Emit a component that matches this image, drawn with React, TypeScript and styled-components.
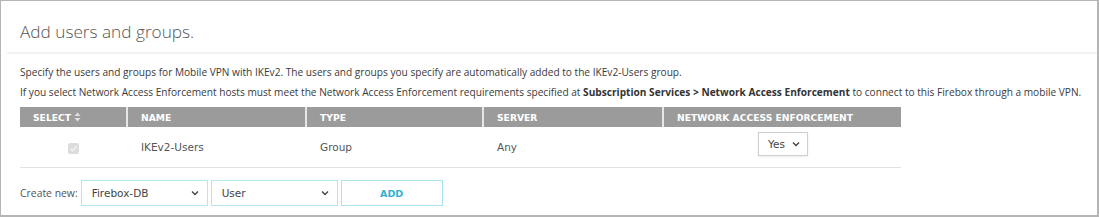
import React from 'react'
import styled, { createGlobalStyle } from 'styled-components'

const GlobalStyle = createGlobalStyle`
  html, body { margin: 0; padding: 0; background: #fff; }
  body { font-family: "Open Sans", "Liberation Sans", sans-serif; }
`

const Panel = styled.div`
  box-sizing: border-box;
  width: 1099px;
  height: 217px;
  border: 1px solid #b5b5b5;
  border-right-width: 2px;
  border-bottom-width: 2px;
  background: #fff;
`

const Title = styled.h2`
  margin: 0 0 0 6px;
  padding: 19px 0 8px 13px;
  font-family: "Open Sans", sans-serif;
  font-weight: 300;
  font-size: 17.2px;
  line-height: 24px;
  color: #555;
  border-bottom: 2px solid #f2f2f2;
`

const Body = styled.div`
  padding: 8px 0 0 19px;
`

const Text = styled.p`
  margin: 0;
  font-size: 10.15px;
  line-height: 20px;
  color: #3a3a3a;
  white-space: nowrap;

  b { font-weight: 700; color: #333; }
`

const Table = styled.table`
  width: 881px;
  table-layout: fixed;
  border-collapse: collapse;
  margin-top: 5px;
  font-family: Verdana, "DejaVu Sans", sans-serif;
`

const Th = styled.th`
  height: 20px;
  padding: 0 0 0 13px;
  box-sizing: border-box;
  background: #9b9b9b;
  color: #fff;
  font-size: 9.2px;
  font-weight: 700;
  text-align: left;
  border-left: 2px solid #e6e6e6;
  white-space: nowrap;
  &:first-child { border-left: none; }
`

const Td = styled.td<{ $center?: boolean }>`
  height: 40px;
  padding: 0 0 0 14px;
  font-size: 10.5px;
  color: #555;
  border-bottom: 1px solid #e2e2e2;
  text-align: ${({ $center }) => ($center ? 'center' : 'left')};
  &:first-child { padding-left: 0; }
`

const SortIcon = styled.svg`
  margin-left: 3px;
  vertical-align: -1px;
`

const Check = styled.svg`
  display: inline-block;
  margin-top: 2px;
  vertical-align: middle;
`

const SmallSelect = styled.div`
  display: inline-flex;
  align-items: center;
  justify-content: space-between;
  box-sizing: border-box;
  width: 50px;
  height: 24px;
  padding: 0 7px 0 9px;
  margin-left: 81px;
  margin-top: -6px;
  border: 1px solid #cfcfcf;
  box-shadow: 0 1px 2px rgba(0, 0, 0, 0.08);
  font-size: 10.5px;
  color: #444;
  background: #fff;
`

const CreateRow = styled.div`
  display: flex;
  align-items: center;
  gap: 3px;
  margin-top: 12px;
`

const Label = styled.span`
  flex: 0 0 56px;
  font-size: 10.4px;
  color: #555;
  white-space: nowrap;
`

const Field = styled.div<{ $w: number }>`
  display: flex;
  align-items: center;
  justify-content: space-between;
  box-sizing: border-box;
  width: ${({ $w }) => $w}px;
  height: 26px;
  padding: 0 8px 0 10px;
  border: 1px solid #b3e6ee;
  font-family: Verdana, "DejaVu Sans", sans-serif;
  font-size: 10.5px;
  color: #444;
  background: #fff;
`

const AddButton = styled.button`
  box-sizing: border-box;
  width: 102px;
  height: 26px;
  border: 1px solid #a9e3ec;
  background: #fff;
  color: #32b0cf;
  font-family: Verdana, "DejaVu Sans", sans-serif;
  font-weight: 700;
  font-size: 9.5px;
`

const Chevron = () => (
  <svg width="8" height="6" viewBox="0 0 8 6">
    <path d="M1 1.5 L4 4.5 L7 1.5" fill="none" stroke="#444" strokeWidth="1.4" />
  </svg>
)

const columns = [
  { name: 'SELECT', w: 107 },
  { name: 'NAME', w: 179 },
  { name: 'TYPE', w: 177 },
  { name: 'SERVER', w: 180 },
  { name: 'NETWORK ACCESS ENFORCEMENT', w: 238 },
]

export default function App() {
  return (
    <>
      <GlobalStyle />
      <Panel>
        <Title>Add users and groups.</Title>
        <Body>
          <Text>
            Specify the users and groups for Mobile VPN with IKEv2. The users and groups you specify are
            automatically added to the IKEv2-Users group.
          </Text>
          <Text>
            If you select Network Access Enforcement hosts must meet the Network Access Enforcement requirements
            specified at <b>Subscription Services &gt; Network Access Enforcement</b> to connect to this Firebox
            through a mobile VPN.
          </Text>
          <Table>
            <colgroup>
              {columns.map((c) => (
                <col key={c.name} style={{ width: c.w }} />
              ))}
            </colgroup>
            <thead>
              <tr>
                {columns.map((c, i) => (
                  <Th key={c.name}>
                    {c.name}
                    {i === 0 && (
                      <SortIcon width="7" height="10" viewBox="0 0 7 10">
                        <path d="M3.5 0.5 L6.5 4 L0.5 4 Z" fill="#e0e0e0" />
                        <path d="M3.5 9.5 L6.5 6 L0.5 6 Z" fill="#e0e0e0" />
                      </SortIcon>
                    )}
                  </Th>
                ))}
              </tr>
            </thead>
            <tbody>
              <tr>
                <Td $center>
                  <Check width="11" height="11" viewBox="0 0 11 11">
                    <rect x="0" y="0" width="11" height="11" rx="2" fill="#dcdcdc" />
                    <path d="M2.5 5.8 L4.6 7.8 L8.6 3.2" fill="none" stroke="#f4f4f4" strokeWidth="1.3" />
                  </Check>
                </Td>
                <Td>IKEv2-Users</Td>
                <Td>Group</Td>
                <Td>Any</Td>
                <Td>
                  <SmallSelect>
                    Yes <Chevron />
                  </SmallSelect>
                </Td>
              </tr>
            </tbody>
          </Table>
          <CreateRow>
            <Label>Create new:</Label>
            <Field $w={127}>
              Firebox-DB <Chevron />
            </Field>
            <Field $w={127}>
              User <Chevron />
            </Field>
            <AddButton>ADD</AddButton>
          </CreateRow>
        </Body>
      </Panel>
    </>
  )
}
